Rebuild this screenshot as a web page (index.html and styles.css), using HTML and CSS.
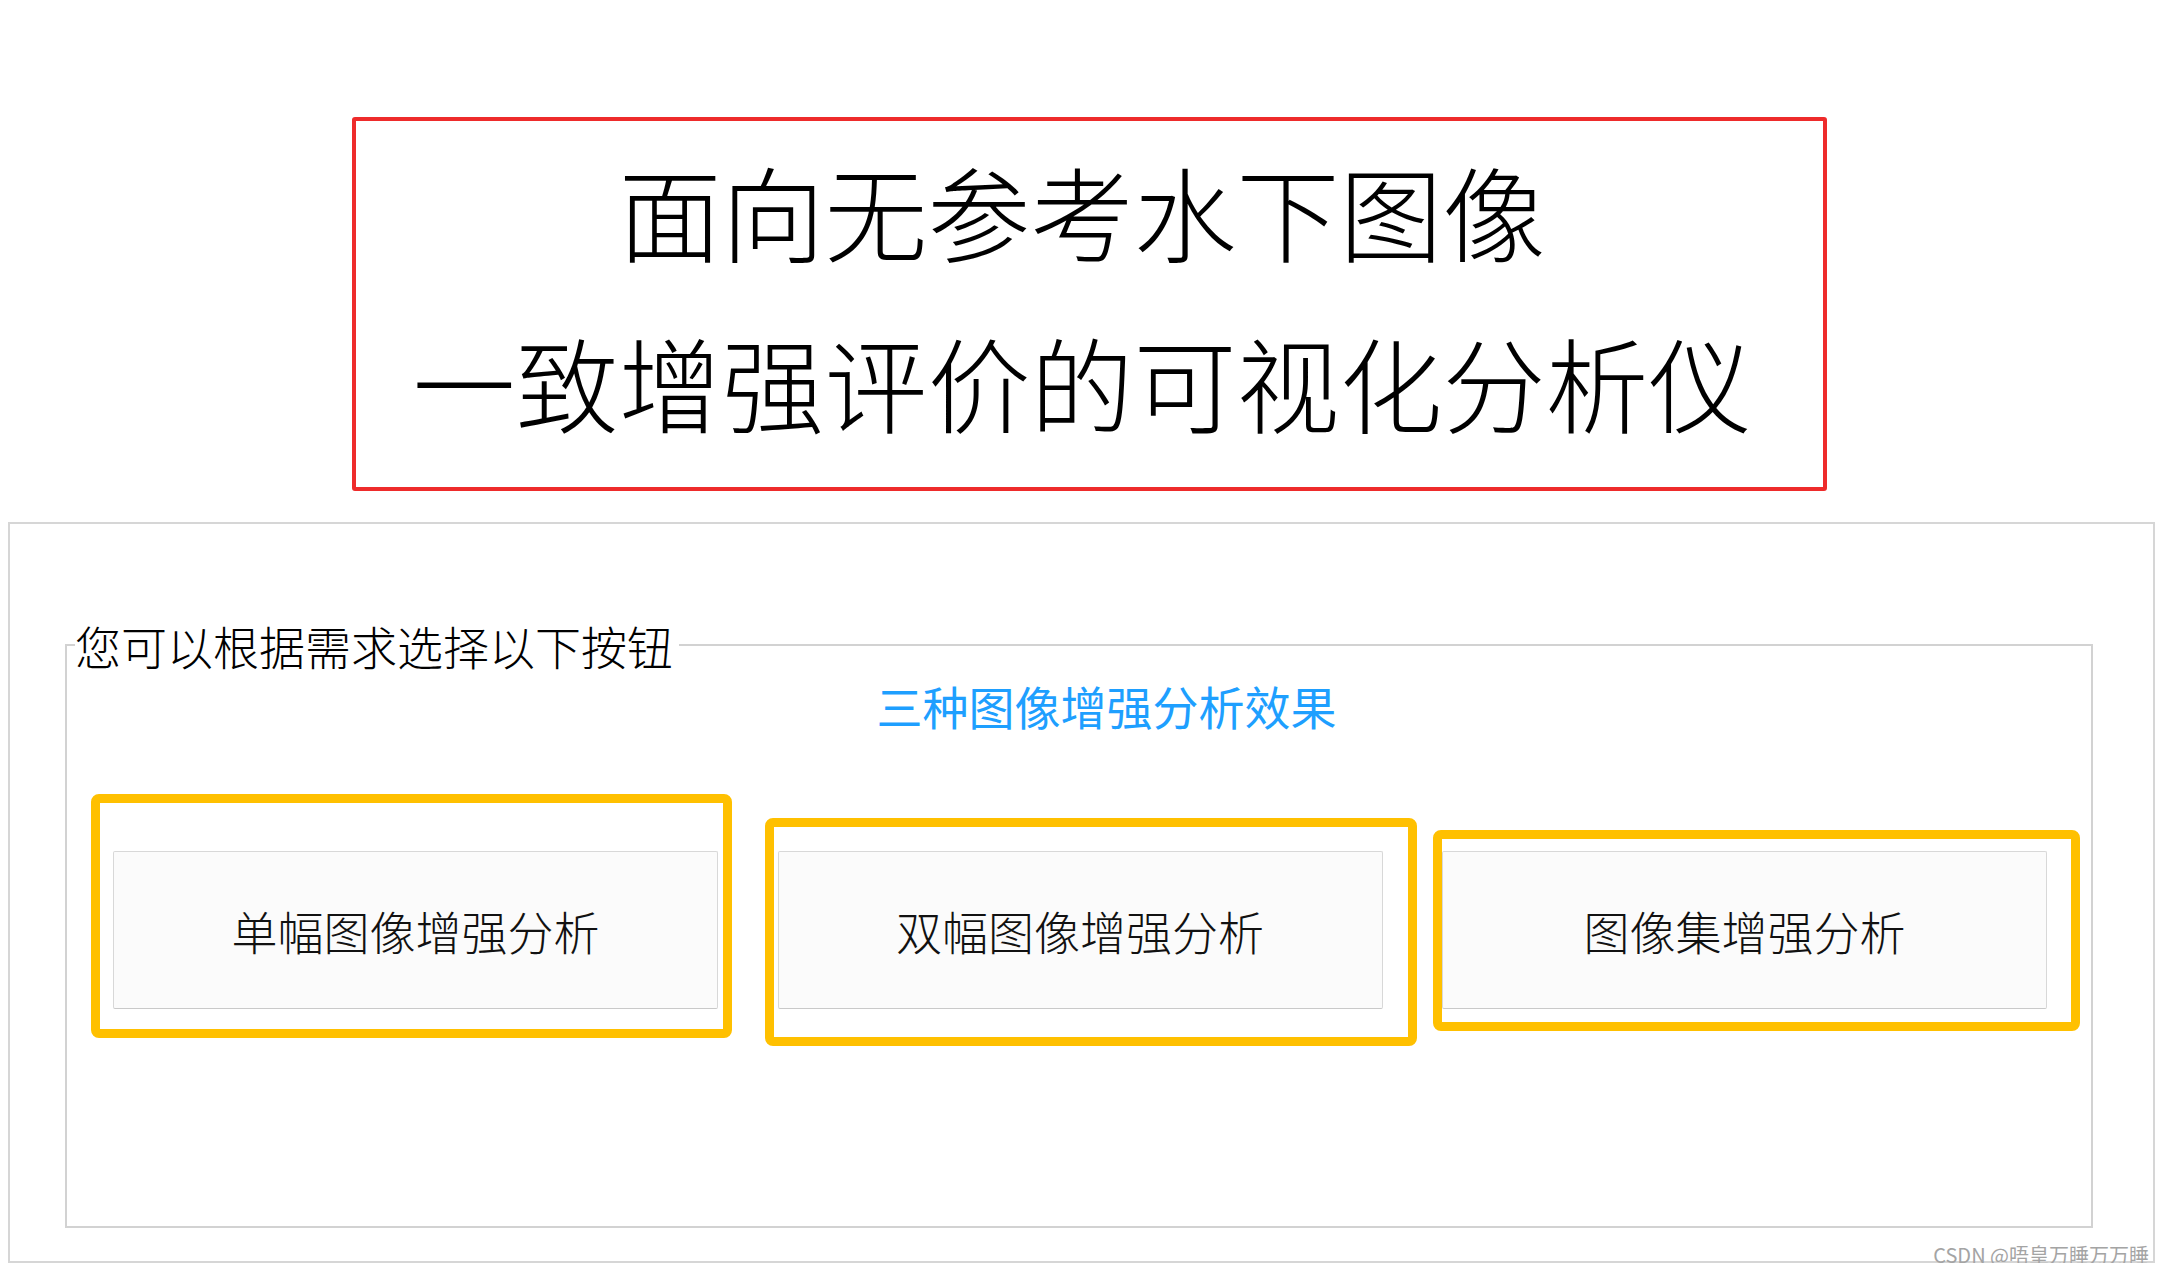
FILE: index.html
```html
<!DOCTYPE html>
<html lang="zh-CN">
<head>
<meta charset="utf-8">
<title>面向无参考水下图像一致增强评价的可视化分析仪</title>
<link rel="stylesheet" href="styles.css">
</head>
<body>
  <header class="title-area">
    <div class="title-frame">
      <h1 class="title">面向无参考水下图像<br>一致增强评价的可视化分析仪</h1>
    </div>
  </header>

  <main class="panel">
    <fieldset class="choice-group">
      <legend class="choice-legend">您可以根据需求选择以下按钮</legend>
      <h2 class="subtitle">三种图像增强分析效果</h2>
      <div class="button-row">
        <div class="button-cell">
          <button class="analysis-btn" type="button">单幅图像增强分析</button>
          <span class="mark mark-1"></span>
        </div>
        <div class="button-cell">
          <button class="analysis-btn" type="button">双幅图像增强分析</button>
          <span class="mark mark-2"></span>
        </div>
        <div class="button-cell">
          <button class="analysis-btn" type="button">图像集增强分析</button>
          <span class="mark mark-3"></span>
        </div>
      </div>
    </fieldset>
    <div class="watermark">CSDN @唔皇万睡万万睡</div>
  </main>
</body>
</html>
```

FILE: styles.css
```css
html, body {
  background: #ffffff;
}

body {
  margin: 8px;
  font-family: "Noto Sans CJK SC", "Noto Sans", sans-serif;
  color: #000;
}

.title-area {
  padding-top: 109px;
  padding-bottom: 31px;
}

.title-frame {
  box-sizing: border-box;
  width: 1475px;
  margin-left: calc(50% - 730px);
  border: 4px solid #ee2b2b;
  border-radius: 3px;
  padding: 4px 14px 20px 0;
}

.title {
  margin: 0;
  font-size: 103px;
  line-height: 171px;
  font-weight: 300;
  text-align: center;
  color: #000;
  letter-spacing: 0;
}

.panel {
  position: relative;
  box-sizing: border-box;
  border: 2px solid #d6d6d6;
  padding: 91px 60px 33px 55px;
}

.choice-group {
  margin: 0;
  border: 2px solid #d2d2d2;
  padding: 0 0 217px 0;
  min-width: 0;
}

.choice-legend {
  margin-left: 8px;
  padding: 0 6px 0 0;
  font-size: 46px;
  line-height: 60px;
  font-weight: 300;
  color: #000;
}

.subtitle {
  margin: 0;
  padding-left: 55px;
  font-size: 46px;
  line-height: 60px;
  font-weight: 400;
  color: #1e9fff;
  text-align: center;
}

.button-row {
  margin-top: 116px;
  padding-left: 46px;
  display: grid;
  grid-template-columns: repeat(3, 605px);
  column-gap: 59.5px;
}

.button-cell {
  position: relative;
  height: 158px;
}

.analysis-btn {
  display: block;
  box-sizing: border-box;
  width: 100%;
  height: 100%;
  margin: 0;
  background: #fbfbfb;
  border: 1px solid #d8d8d8;
  border-bottom-color: #c9c9c9;
  border-radius: 2px;
  font-family: "Noto Sans CJK SC", "Noto Sans", sans-serif;
  font-size: 46px;
  font-weight: 300;
  color: #111;
  cursor: pointer;
  padding: 0;
}

.mark {
  position: absolute;
  border: 9px solid #ffc000;
  border-radius: 8px;
  pointer-events: none;
}

.mark-1 {
  top: -57px;
  left: -22px;
  right: -14px;
  bottom: -29px;
}

.mark-2 {
  top: -33px;
  left: -13px;
  right: -34px;
  bottom: -37px;
}

.mark-3 {
  top: -21px;
  left: -9px;
  right: -33px;
  bottom: -22px;
}

.watermark {
  position: absolute;
  right: 4px;
  bottom: -6px;
  font-family: "Noto Sans CJK SC", "Noto Sans", sans-serif;
  font-size: 20px;
  line-height: 24px;
  color: #a4a4a4;
  white-space: nowrap;
}
```
